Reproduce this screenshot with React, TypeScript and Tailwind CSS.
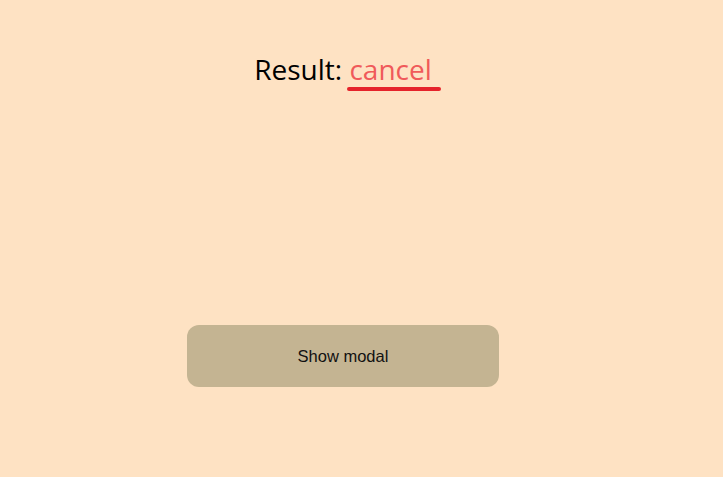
export default function App() {
  return (
    <div className="min-h-[477px] w-full bg-[#fee2c3]">
      <div className="ml-[187px] flex w-[312px] flex-col items-center pt-[47px]">
        <h1 className="whitespace-nowrap text-[28px] leading-[44px] text-black font-['Open_Sans',sans-serif]">
          Result: <span className="text-[#f05a5a]">cancel</span>
        </h1>
        <div className="ml-[102px] -mt-[4px] h-[4px] w-[94px] rounded-full bg-[#e5232b]" />
        <button className="mt-[234px] h-[62px] w-[312px] rounded-[12px] bg-[#c4b492] text-[16.5px] text-[#111] font-['Liberation_Sans',Arial,sans-serif]">
          Show modal
        </button>
      </div>
    </div>
  );
}
